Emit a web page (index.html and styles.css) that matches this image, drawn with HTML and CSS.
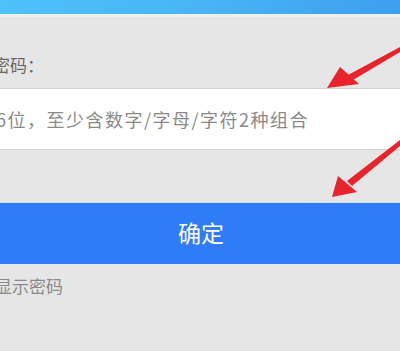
FILE: index.html
```html
<!DOCTYPE html>
<html lang="zh-CN">
<head>
<meta charset="utf-8">
<link rel="stylesheet" href="styles.css">
</head>
<body>
<div class="page">
  <div class="topbar"></div>
  <div class="topline"></div>
  <div class="label">密码：</div>
  <div class="field"><span class="placeholder">6位，至少含数字/字母/字符2种组合</span></div>
  <div class="button">确定</div>
  <div class="show">显示密码</div>
  <svg class="arrows" width="400" height="351" viewBox="0 0 400 351">
    <polygon points="400,47 400,52 353,80 348,75" fill="#e8232b"/>
    <polygon points="327,88 340,67 359,84" fill="#e8232b"/>
    <polygon points="400,140 400,146 352,186 347,181" fill="#e8232b"/>
    <polygon points="332,197 338,176 357,192" fill="#e8232b"/>
  </svg>
</div>
</body>
</html>
```
FILE: styles.css
```css
html, body {
  margin: 0;
  padding: 0;
}
body {
  background: #e6e6e6;
  font-family: "Noto Sans CJK SC", "Noto Sans", sans-serif;
  width: 400px;
  height: 351px;
  overflow: hidden;
}
.page {
  position: relative;
  width: 400px;
  height: 351px;
  overflow: hidden;
}
.topbar {
  height: 14px;
  background: linear-gradient(90deg, #4fc1f9 0%, #48b4f6 50%, #3d9ff0 100%);
}
.topline {
  height: 3px;
  background: #efefef;
}
.label {
  margin-top: 36px;
  margin-left: -7px;
  font-size: 17px;
  line-height: 24px;
  color: #666666;
  white-space: nowrap;
}
.field {
  margin-top: 11px;
  height: 60px;
  background: #ffffff;
  border-top: 1px solid #d2d2d2;
  border-bottom: 1px solid #d2d2d2;
  display: flex;
  align-items: center;
  white-space: nowrap;
}
.placeholder {
  margin-left: -4px;
  font-size: 18px;
  color: #8a8a8a;
  letter-spacing: 1.5px;
}
.button {
  margin-top: 52px;
  height: 58px;
  padding-bottom: 3px;
  background: #2f7cf6;
  color: #ffffff;
  font-size: 23px;
  display: flex;
  align-items: center;
  justify-content: center;
  border-top: 1px solid #cfe0f5;
  padding-left: 2px;
}
.show {
  margin-top: 10px;
  margin-left: -5px;
  font-size: 17px;
  line-height: 24px;
  color: #8a8a8a;
  white-space: nowrap;
}
.arrows {
  position: absolute;
  left: 0;
  top: 0;
  pointer-events: none;
}
```
